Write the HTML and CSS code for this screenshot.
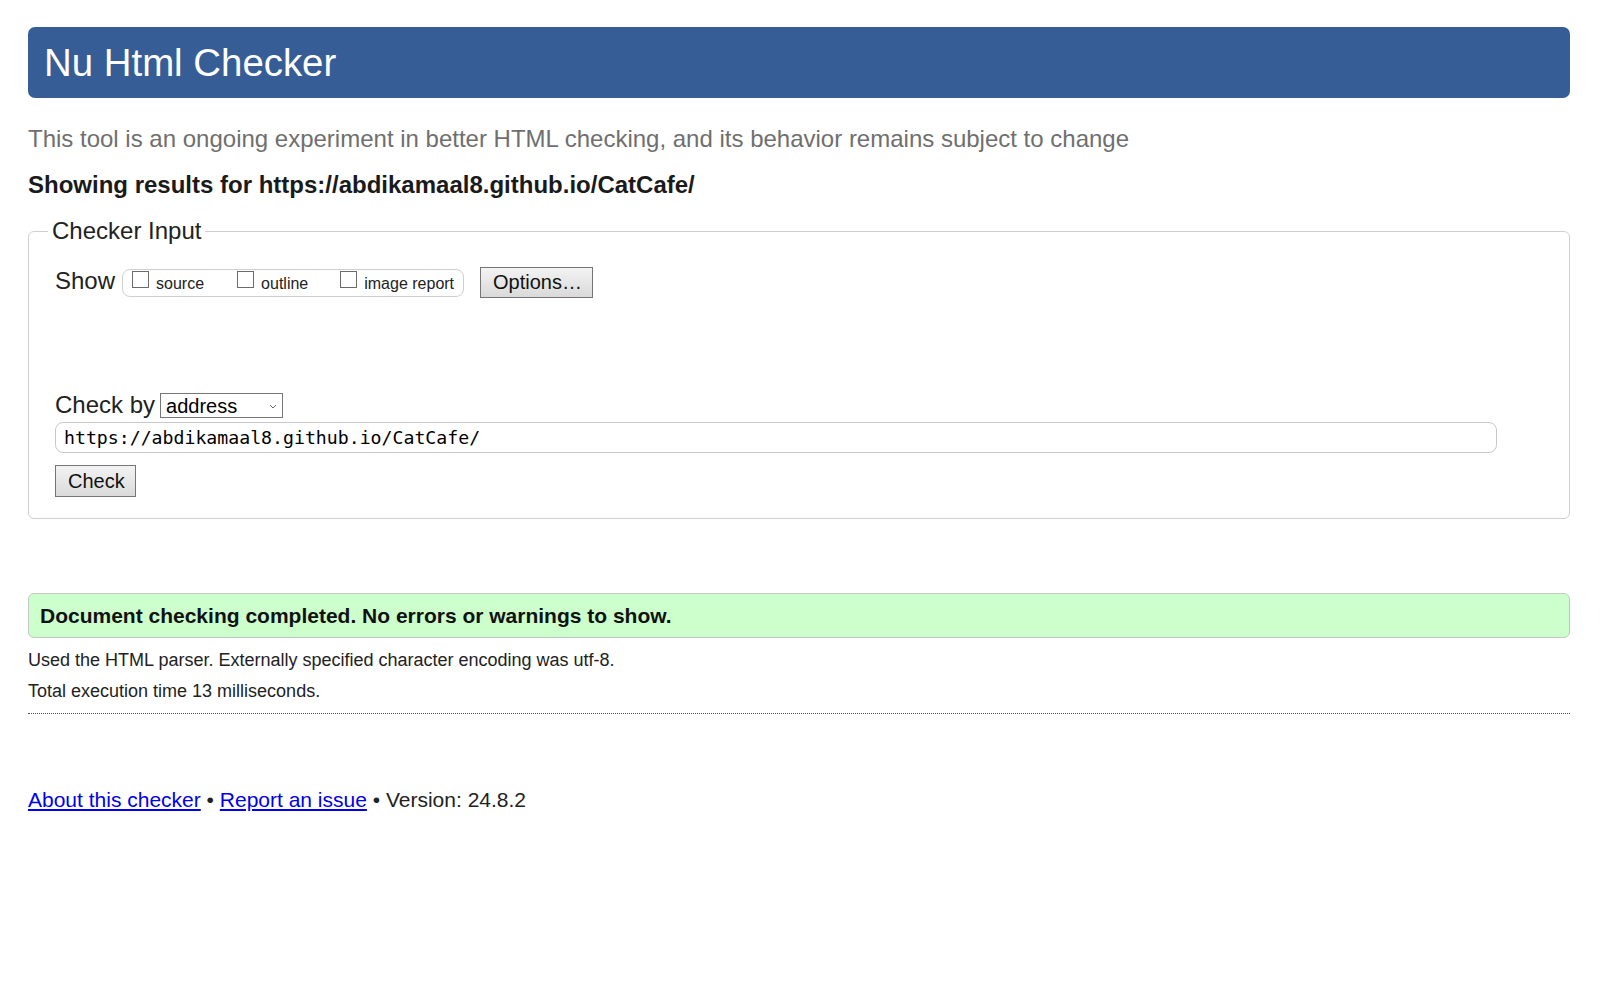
FILE: index.html
```html
<!DOCTYPE html>
<html lang="en">
<head>
<meta charset="utf-8">
<title>Nu Html Checker</title>
<link rel="stylesheet" href="styles.css">
</head>
<body>
<div class="page">
  <h1 class="title">Nu Html Checker</h1>
  <p class="intro">This tool is an ongoing experiment in better HTML checking, and its behavior remains subject to change</p>
  <p class="showing">Showing results for https://abdikamaal8.github.io/CatCafe/</p>
  <form class="form">
    <fieldset class="checker">
      <legend class="legend">Checker Input</legend>
      <div class="show-row">
        <span class="show-label">Show</span>
        <span class="show-group">
          <label class="opt"><input type="checkbox" class="cb"><span class="opt-text">source</span></label>
          <label class="opt"><input type="checkbox" class="cb"><span class="opt-text">outline</span></label>
          <label class="opt"><input type="checkbox" class="cb"><span class="opt-text">image report</span></label>
        </span>
        <button type="button" class="btn btn-options">Options…</button>
      </div>
      <div class="by-row">
        <span class="by-label">Check by</span>
        <span class="select-wrap">
          <select class="select"><option>address</option></select>
          <svg class="chev" width="8" height="5" viewBox="0 0 8 5"><polyline points="1,1 4,4 7,1" fill="none" stroke="#666" stroke-width="1"/></svg>
        </span>
      </div>
      <input class="url" type="url" value="https://abdikamaal8.github.io/CatCafe/">
      <button type="button" class="btn btn-check">Check</button>
    </fieldset>
  </form>
  <p class="success">Document checking completed. No errors or warnings to show.</p>
  <p class="meta">Used the HTML parser. Externally specified character encoding was utf-8.</p>
  <p class="meta">Total execution time 13 milliseconds.</p>
  <hr class="rule">
  <p class="footer"><a class="link" href="#">About this checker</a> • <a class="link" href="#">Report an issue</a> • Version: 24.8.2</p>
</div>
</body>
</html>
```
FILE: styles.css
```css
html, body {
  margin: 0;
  padding: 0;
  background: #fff;
}

body {
  font-family: "Liberation Sans", Arial, sans-serif;
  color: #222;
}

.page {
  padding: 27px 36px 0 28px;
}

.title {
  margin: 0;
  background: #365d95;
  color: #fff;
  font-size: 38.4px;
  font-weight: normal;
  line-height: 43px;
  padding: 14px 16px;
  border-radius: 7px;
}

.intro {
  margin: 29px 0 0;
  font-size: 24px;
  line-height: 24px;
  color: #6f6f6f;
}

.showing {
  margin: 22px 0 0;
  font-size: 24px;
  font-weight: bold;
  line-height: 24px;
  color: #1a1a1a;
}

.form {
  margin: 0;
}

.checker {
  margin: 20px 0 0;
  padding: 22px 26px 21px;
  border: 1px solid #cfcfcf;
  border-radius: 6px;
  min-width: 0;
}

.legend {
  font-size: 24px;
  line-height: 28px;
  padding: 0 4px;
  margin-left: -7px;
  color: #222;
}

.show-row {
  display: flex;
  align-items: center;
  height: 31px;
}

.show-label {
  font-size: 24px;
  line-height: 28px;
  margin-right: 7px;
  margin-bottom: 3px;
}

.show-group {
  display: flex;
  align-items: flex-start;
  box-sizing: border-box;
  height: 28px;
  border: 1px solid #cfcfcf;
  border-radius: 8px;
  padding: 0 9px;
}

.opt {
  display: flex;
  align-items: flex-start;
  margin-right: 32px;
}

.opt:first-child {
  margin-right: 33px;
}

.opt:last-child {
  margin-right: 0;
}

.cb {
  -webkit-appearance: none;
  appearance: none;
  box-sizing: border-box;
  width: 17px;
  height: 17px;
  margin: 1px 7px 0 0;
  border: 1px solid #6b6b6b;
  border-radius: 0;
  background: #fff;
}

.opt-text {
  font-size: 16px;
  line-height: 18px;
  margin-top: 5px;
}

.btn {
  box-sizing: border-box;
  font-family: "Liberation Sans", Arial, sans-serif;
  font-size: 20px;
  color: #111;
  border: 1px solid #767676;
  border-radius: 0;
  background: linear-gradient(#f3f3f3, #dadada);
  padding: 0 12px;
  margin: 0;
}

.btn-options {
  margin-left: 16px;
  height: 31px;
  width: 113px;
}

.by-row {
  display: flex;
  align-items: flex-start;
  margin-top: 92px;
}

.by-label {
  font-size: 24px;
  line-height: 28px;
  margin-top: 1px;
  margin-right: 5px;
}

.select-wrap {
  position: relative;
  margin-top: 3px;
  display: block;
}

.select {
  display: block;
  -webkit-appearance: none;
  appearance: none;
  box-sizing: border-box;
  width: 123px;
  height: 25px;
  margin: 0;
  padding: 0 0 0 5px;
  border: 1px solid #767676;
  border-radius: 0;
  background: #fff;
  color: #000;
  font-family: "Liberation Sans", Arial, sans-serif;
  font-size: 20px;
}

.chev {
  position: absolute;
  right: 6px;
  top: 11px;
}

.url {
  display: block;
  box-sizing: border-box;
  width: calc(100% - 46px);
  height: 31px;
  margin: 3px 0 0;
  padding: 0 8px;
  border: 1px solid #c8c8c8;
  border-radius: 8px;
  font-family: "DejaVu Sans Mono", "Liberation Mono", monospace;
  font-size: 18.2px;
  color: #000;
  background: #fff;
}

.btn-check {
  display: block;
  margin-top: 12px;
  height: 32px;
  width: 81px;
}

.success {
  margin: 74px 0 0;
  border: 1px solid #c6c6c6;
  background: #ccffcc;
  border-radius: 6px;
  padding: 1px 11px 0;
  line-height: 42px;
  font-size: 21px;
  font-weight: bold;
  color: #111;
}

.meta {
  margin: 13px 0 0;
  font-size: 18px;
  line-height: 18px;
  color: #222;
}

.meta + .meta {
  margin-top: 13px;
}

.rule {
  margin: 13px 0 0;
  border: 0;
  border-top: 1px dotted #555;
  height: 0;
}

.footer {
  margin: 74px 0 0;
  font-size: 21px;
  line-height: 24px;
  color: #222;
}

.link {
  color: #0000ee;
  text-decoration: underline;
}
```
